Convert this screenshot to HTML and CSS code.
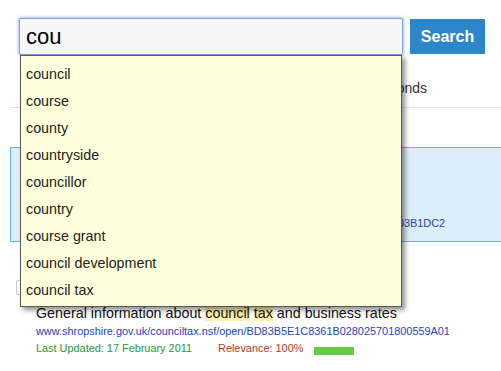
FILE: index.html
```html
<!DOCTYPE html>
<html lang="en">
<head>
    <meta charset="UTF-8">
    <meta name="viewport" content="width=device-width, initial-scale=1.0">
    <title>Site Search</title>
    <link rel="stylesheet" href="styles.css">
</head>
<body>
    <form class="search-form" action="#">
        <div class="search-box">
            <input type="text" class="search-input" name="q" value="cou" autocomplete="off">
            <ul class="suggestions">
                <li>council</li>
                <li>course</li>
                <li>county</li>
                <li>countryside</li>
                <li>councillor</li>
                <li>country</li>
                <li>course grant</li>
                <li>council development</li>
                <li>council tax</li>
            </ul>
        </div>
        <button type="submit" class="search-button">Search</button>
    </form>

    <p class="stats">Results 1 - 10 of about 204 for cou in 0.18 seconds</p>

    <section class="results">
        <div class="featured">
            <p class="result-url">www.shropshire.gov.uk/counciltax.nsf/open/802571003645918025700045003B1DC2</p>
        </div>

        <div class="result-check"></div>

        <div class="result">
            <p class="result-title">General information about <span class="hl">council</span> <span class="hl">tax</span> and business rates</p>
            <p class="result-url">www.shropshire.gov.uk/counciltax.nsf/open/BD83B5E1C8361B028025701800559A01</p>
            <p class="result-meta">
                <span class="updated">Last Updated: 17 February 2011</span>
                <span class="relevance">Relevance: 100%</span>
                <span class="relevance-bar"></span>
            </p>
        </div>
    </section>
</body>
</html>
```

FILE: styles.css
```css
body {
    font-family: "Liberation Sans", Arial, Helvetica, sans-serif;
    margin: 0;
    padding: 0;
    background-color: #fff;
    color: #222;
}

p {
    margin: 0;
}

.search-form {
    display: flex;
    align-items: center;
    margin: 18px 0 0 19px;
}

.search-box {
    position: relative;
    width: 384px;
}

.search-input {
    display: block;
    width: 100%;
    height: 37px;
    box-sizing: border-box;
    padding: 0 6px;
    border: 1px solid #7aa5d8;
    border-radius: 2px;
    box-shadow: 0 0 3px 1px rgba(100, 150, 215, 0.55);
    background-color: #f7f7f8;
    font-family: inherit;
    font-size: 22px;
    color: #000;
    outline: none;
}

.search-button {
    width: 75px;
    height: 35px;
    margin-left: 7px;
    border: none;
    background-color: #2b87c9;
    color: #fff;
    font-family: inherit;
    font-size: 16px;
    font-weight: bold;
    cursor: pointer;
}

.suggestions {
    position: absolute;
    top: 37px;
    left: 1px;
    z-index: 10;
    width: 382px;
    box-sizing: border-box;
    margin: 0;
    padding: 5px 0 2px;
    list-style: none;
    border: 1px solid #5a5a5a;
    background-color: #ffffdc;
    box-shadow: 3px 3px 5px rgba(0, 0, 0, 0.45);
}

.suggestions li {
    padding: 0 5px;
    line-height: 27px;
    font-size: 14.3px;
    color: #222;
}

.stats {
    width: 427px;
    margin-top: 25px;
    text-align: right;
    font-size: 14px;
    line-height: 17px;
    color: #333;
}

.results {
    margin: 10px 0 0 10px;
    border-top: 1px solid #e3e3e3;
}

.featured {
    margin-top: 39px;
    padding: 67px 0 9px 25px;
    border: 1px solid #62b3e8;
    border-right: none;
    background-color: #ddeef9;
}

.result-title {
    font-size: 14.3px;
    line-height: 19px;
    color: #111;
}

.result-url {
    font-size: 10.9px;
    line-height: 17px;
    color: #1c45b8;
}

.result-check {
    width: 14px;
    height: 13px;
    margin: 38px 0 0 6px;
    border: 1px solid #c8c8c8;
    border-radius: 2px;
    background-color: #fff;
}

.result {
    margin-top: 9px;
    padding-left: 26px;
}

.hl {
    background-color: #fff2aa;
}

.result-meta {
    font-size: 10.9px;
    line-height: 17px;
}

.updated {
    color: #23993a;
}

.relevance {
    margin-left: 23px;
    color: #b03a28;
}

.relevance-bar {
    display: inline-block;
    width: 40px;
    height: 8px;
    margin-left: 8px;
    vertical-align: -3px;
    background-color: #66cc44;
}
```
